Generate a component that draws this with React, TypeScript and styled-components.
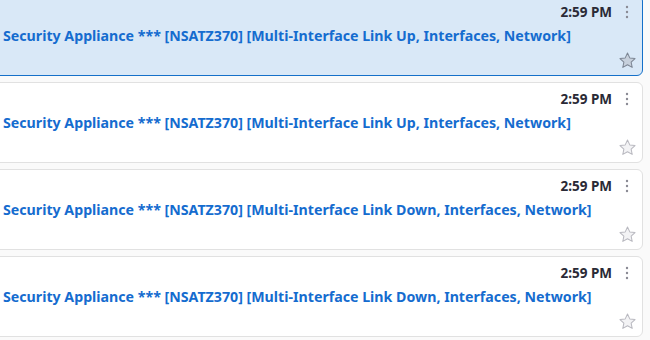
import React from 'react'
import styled, { createGlobalStyle } from 'styled-components'

const GlobalStyle = createGlobalStyle`
  html, body {
    margin: 0;
    padding: 0;
    background: #fafafa;
    overflow: hidden;
  }
  body {
    font-family: "Noto Sans", "Open Sans", Arial, sans-serif;
  }
`

const List = styled.div`
  width: 700px;
  margin: -5px 0 0 -56px;
  display: flex;
  flex-direction: column;
  gap: 6px;
`

const Card = styled.div<{ $selected?: boolean }>`
  box-sizing: border-box;
  height: 81px;
  width: 699px;
  border-radius: 6px;
  border: 1px solid ${({ $selected }) => ($selected ? '#1570c9' : '#e1e1e1')};
  background: ${({ $selected }) => ($selected ? '#d9e8f7' : '#ffffff')};
  display: grid;
  grid-template-columns: 1fr 28px;
  grid-template-rows: 22px 26px 1fr;
  padding: 5px 0 0 58px;
`

const Time = styled.div`
  grid-column: 1;
  grid-row: 1;
  justify-self: end;
  font-size: 13.5px;
  font-weight: 700;
  color: #2a2a36;
  line-height: 22px;
  padding-right: 2px;
`

const Subject = styled.div`
  grid-column: 1 / 3;
  grid-row: 2;
  font-size: 14.2px;
  font-weight: 700;
  color: #156ccf;
  line-height: 26px;
  white-space: nowrap;
`

const Kebab = styled.div`
  grid-column: 2;
  grid-row: 1;
  display: flex;
  align-items: center;
  justify-content: center;
  padding-right: 2px;
`

const StarSlot = styled.div`
  grid-column: 2;
  grid-row: 3;
  display: flex;
  align-items: flex-start;
  justify-content: center;
  padding: 2px 2px 0 0;
`

const Dots = () => (
  <svg width="4" height="14" viewBox="0 0 4 14">
    <circle cx="2" cy="2" r="1.2" fill="#8a8a94" />
    <circle cx="2" cy="7" r="1.2" fill="#8a8a94" />
    <circle cx="2" cy="12" r="1.2" fill="#8a8a94" />
  </svg>
)

const Star = ({ selected }: { selected?: boolean }) => (
  <svg width="19" height="19" viewBox="0 0 24 24">
    <path
      d="M12 2.6l2.9 6.1 6.6.8-4.9 4.6 1.3 6.6L12 17.4l-5.9 3.3 1.3-6.6-4.9-4.6 6.6-.8z"
      fill={selected ? '#c7d0dc' : '#f3f3f5'}
      stroke={selected ? '#7d8694' : '#b9b9c0'}
      strokeWidth="1.3"
      strokeLinejoin="round"
    />
  </svg>
)

const messages = [
  { subject: 'Security Appliance *** [NSATZ370] [Multi-Interface Link Up, Interfaces, Network]', selected: true },
  { subject: 'Security Appliance *** [NSATZ370] [Multi-Interface Link Up, Interfaces, Network]' },
  { subject: 'Security Appliance *** [NSATZ370] [Multi-Interface Link Down, Interfaces, Network]' },
  { subject: 'Security Appliance *** [NSATZ370] [Multi-Interface Link Down, Interfaces, Network]' },
]

const App = () => {
  return (
    <>
      <GlobalStyle />
      <List>
        {messages.map((m, i) => (
          <Card key={i} $selected={m.selected}>
            <Time>2:59 PM</Time>
            <Kebab>
              <Dots />
            </Kebab>
            <Subject>{m.subject}</Subject>
            <StarSlot>
              <Star selected={m.selected} />
            </StarSlot>
          </Card>
        ))}
      </List>
    </>
  )
}

export default App
